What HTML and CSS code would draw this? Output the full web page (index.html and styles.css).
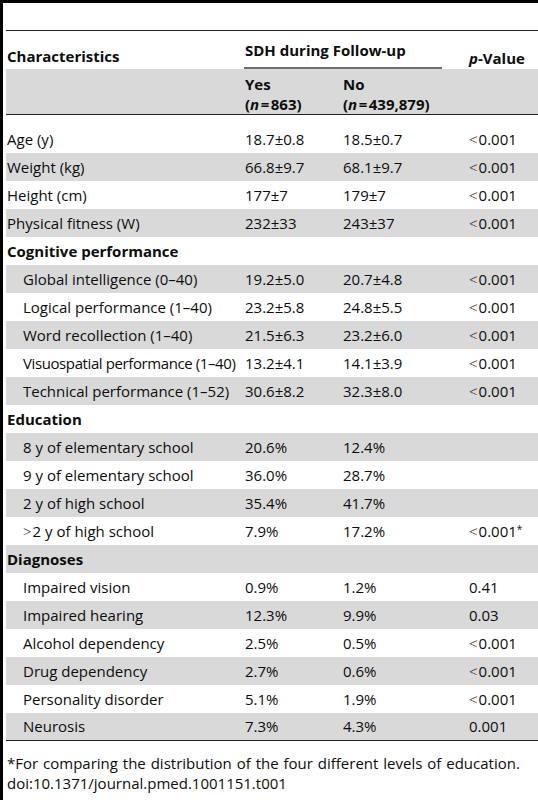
FILE: index.html
```html
<!DOCTYPE html>
<html lang="en">
<head>
    <meta charset="UTF-8">
    <meta name="viewport" content="width=device-width, initial-scale=1.0">
    <title>Table 1</title>
    <link rel="stylesheet" href="styles.css">
</head>
<body>
    <div class="frame">
        <div class="top-space"></div>
        <table class="data-table">
            <colgroup>
                <col class="col-name">
                <col class="col-yes">
                <col class="col-no">
                <col class="col-p">
            </colgroup>
            <thead>
                <tr class="head-top">
                    <th class="head-char">Characteristics</th>
                    <th class="head-sdh" colspan="2"><div class="sdh-label">SDH during Follow-up</div></th>
                    <th class="head-p"><i>p</i>-Value</th>
                </tr>
                <tr class="head-sub">
                    <th></th>
                    <th>Yes<br>(<i>n</i>&#8202;=&#8202;863)</th>
                    <th>No<br>(<i>n</i>&#8202;=&#8202;439,879)</th>
                    <th></th>
                </tr>
            </thead>
            <tbody>
                <tr class="first"><td>Age (y)</td><td>18.7±0.8</td><td>18.5±0.7</td><td><span class="lt">&lt;</span>0.001</td></tr>
                <tr class="grey"><td>Weight (kg)</td><td>66.8±9.7</td><td>68.1±9.7</td><td><span class="lt">&lt;</span>0.001</td></tr>
                <tr><td>Height (cm)</td><td>177±7</td><td>179±7</td><td><span class="lt">&lt;</span>0.001</td></tr>
                <tr class="grey"><td>Physical fitness (W)</td><td>232±33</td><td>243±37</td><td><span class="lt">&lt;</span>0.001</td></tr>
                <tr class="section"><td colspan="4">Cognitive performance</td></tr>
                <tr class="grey sub"><td>Global intelligence (0–40)</td><td>19.2±5.0</td><td>20.7±4.8</td><td><span class="lt">&lt;</span>0.001</td></tr>
                <tr class="sub"><td>Logical performance (1–40)</td><td>23.2±5.8</td><td>24.8±5.5</td><td><span class="lt">&lt;</span>0.001</td></tr>
                <tr class="grey sub"><td>Word recollection (1–40)</td><td>21.5±6.3</td><td>23.2±6.0</td><td><span class="lt">&lt;</span>0.001</td></tr>
                <tr class="sub"><td class="tight">Visuospatial performance (1–40)</td><td>13.2±4.1</td><td>14.1±3.9</td><td><span class="lt">&lt;</span>0.001</td></tr>
                <tr class="grey sub"><td>Technical performance (1–52)</td><td>30.6±8.2</td><td>32.3±8.0</td><td><span class="lt">&lt;</span>0.001</td></tr>
                <tr class="section"><td colspan="4">Education</td></tr>
                <tr class="grey sub"><td>8 y of elementary school</td><td>20.6%</td><td>12.4%</td><td></td></tr>
                <tr class="sub"><td>9 y of elementary school</td><td>36.0%</td><td>28.7%</td><td></td></tr>
                <tr class="grey sub"><td>2 y of high school</td><td>35.4%</td><td>41.7%</td><td></td></tr>
                <tr class="sub"><td><span class="lt">&gt;</span>2 y of high school</td><td>7.9%</td><td>17.2%</td><td><span class="lt">&lt;</span>0.001<sup>*</sup></td></tr>
                <tr class="grey section"><td colspan="4">Diagnoses</td></tr>
                <tr class="sub"><td>Impaired vision</td><td>0.9%</td><td>1.2%</td><td>0.41</td></tr>
                <tr class="grey sub"><td>Impaired hearing</td><td>12.3%</td><td>9.9%</td><td>0.03</td></tr>
                <tr class="sub"><td>Alcohol dependency</td><td>2.5%</td><td>0.5%</td><td><span class="lt">&lt;</span>0.001</td></tr>
                <tr class="grey sub"><td>Drug dependency</td><td>2.7%</td><td>0.6%</td><td><span class="lt">&lt;</span>0.001</td></tr>
                <tr class="sub"><td>Personality disorder</td><td>5.1%</td><td>1.9%</td><td><span class="lt">&lt;</span>0.001</td></tr>
                <tr class="grey sub"><td>Neurosis</td><td>7.3%</td><td>4.3%</td><td>0.001</td></tr>
            </tbody>
        </table>
        <div class="footnote">
            <p>*For comparing the distribution of the four different levels of education.</p>
            <p>doi:10.1371/journal.pmed.1001151.t001</p>
        </div>
    </div>
</body>
</html>
```

FILE: styles.css
```css
* {
    margin: 0;
    padding: 0;
    box-sizing: border-box;
}
body {
    width: 538px;
    height: 800px;
    overflow: hidden;
    background: #fff;
    color: #0d0d0d;
    font-family: "Open Sans", "Noto Sans", sans-serif;
    font-size: 15px;
}
.frame {
    height: 800px;
    border-left: 3px solid #000;
    border-top: 3px solid #000;
    padding-left: 3px;
}
.top-space {
    height: 27px;
}
.data-table {
    width: 532px;
    table-layout: fixed;
    border-collapse: collapse;
    border-top: 1px solid #222;
    border-bottom: 1px solid #222;
}
.col-name { width: 238px; }
.col-yes { width: 98px; }
.col-no { width: 126px; }
.col-p { width: 70px; }

.data-table th {
    text-align: left;
    font-weight: 700;
    line-height: 20px;
    padding-left: 1px;
    vertical-align: top;
}
.head-top th {
    height: 38px;
}
.head-char {
    padding-top: 15px;
}
.data-table th.head-sdh {
    padding-left: 0;
}
.sdh-label {
    margin-right: 26px;
    padding: 9px 0 7px 1px;
    border-bottom: 2px solid #6e6e6e;
}
.head-p {
    padding-top: 17px;
}
.head-sub th {
    background: #d9d9d9;
    height: 45px;
    padding-top: 5px;
    border-bottom: 1px solid #222;
}

.data-table td {
    height: 28px;
    line-height: 20px;
    padding: 0 0 0 1px;
    vertical-align: middle;
    white-space: nowrap;
}
.data-table tr.first td {
    height: 38px;
    padding-top: 10px;
}
.data-table tr.grey td {
    background: #d9d9d9;
}
.data-table tr.sub td:first-child {
    padding-left: 17px;
}
.data-table tr.section td {
    font-weight: 700;
}
.data-table td.tight {
    letter-spacing: -0.4px;
}
.lt {
    font-weight: 300;
    margin-right: 1px;
}
sup {
    font-size: 10px;
    line-height: 0;
    vertical-align: 4px;
}

.footnote {
    padding-top: 12px;
    padding-left: 1px;
    font-size: 15px;
    line-height: 20px;
    word-spacing: 1px;
}
```
